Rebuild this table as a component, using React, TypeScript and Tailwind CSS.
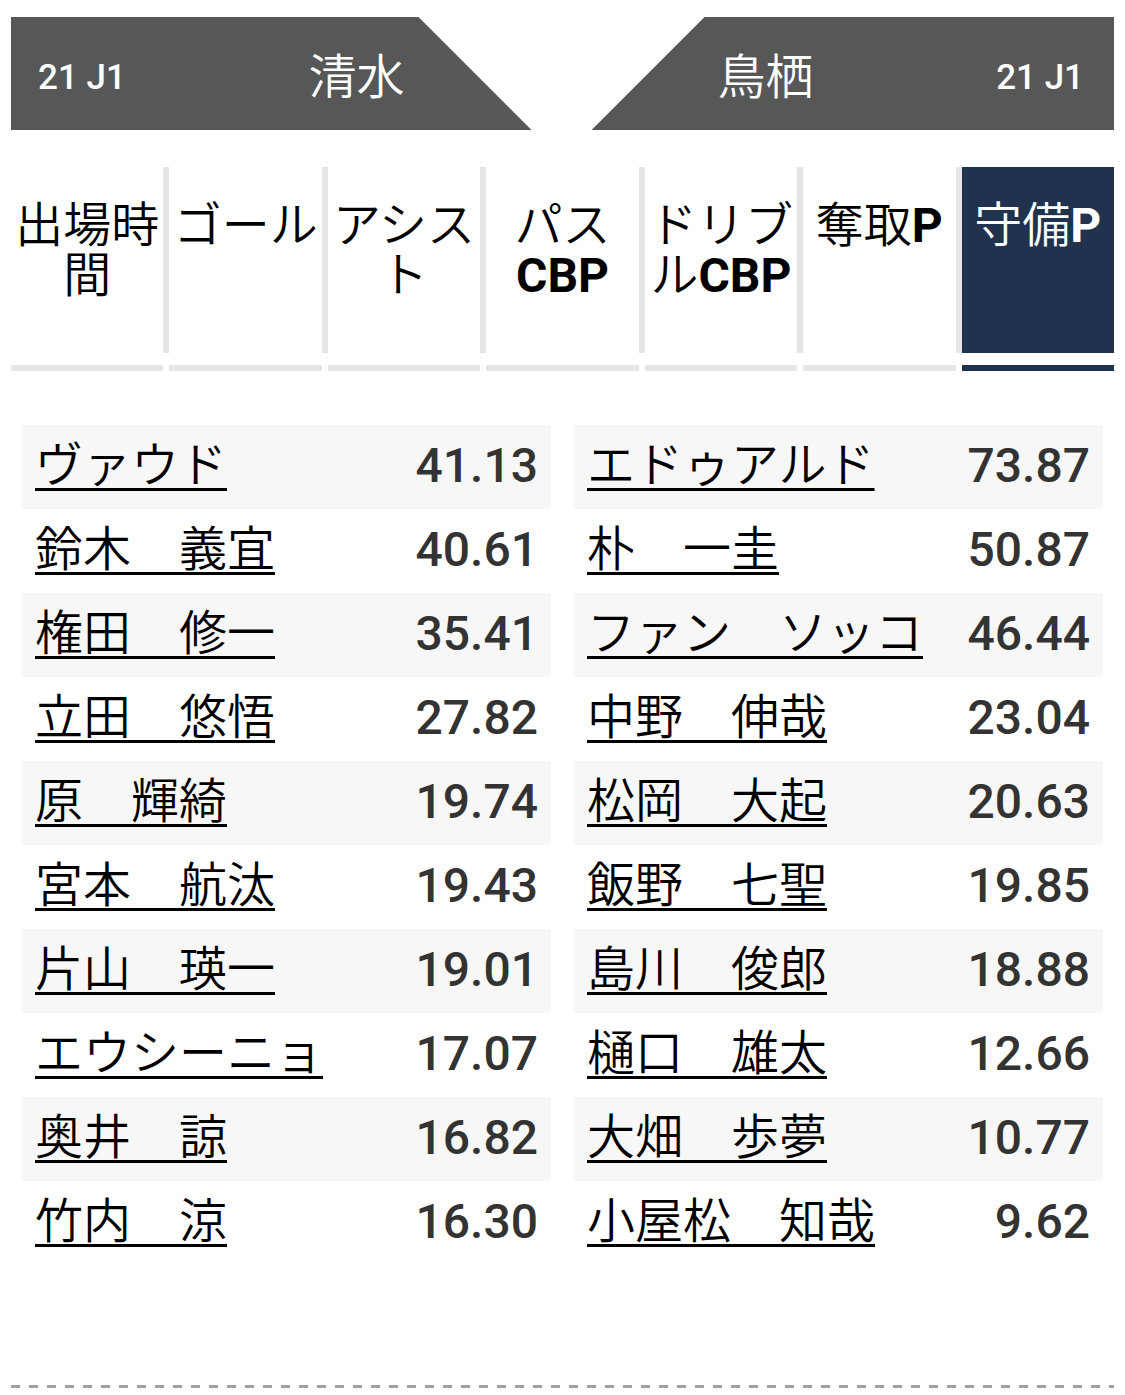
import React from "react";

const cjk = "font-['Noto_Sans_CJK_JP','Noto_Sans',sans-serif]";
const roboto = "font-['Roboto','Noto_Sans_CJK_JP',sans-serif]";

type Tab = { parts: { t: string; b?: boolean }[]; active?: boolean };

const tabs: Tab[] = [
  { parts: [{ t: "出場時間" }] },
  { parts: [{ t: "ゴール" }] },
  { parts: [{ t: "アシスト" }] },
  { parts: [{ t: "パス" }, { t: "CBP", b: true }] },
  { parts: [{ t: "ドリブル" }, { t: "CBP", b: true }] },
  { parts: [{ t: "奪取" }, { t: "P", b: true }] },
  { parts: [{ t: "守備" }, { t: "P", b: true }], active: true },
];

const left: [string, string][] = [
  ["ヴァウド", "41.13"],
  ["鈴木　義宜", "40.61"],
  ["権田　修一", "35.41"],
  ["立田　悠悟", "27.82"],
  ["原　輝綺", "19.74"],
  ["宮本　航汰", "19.43"],
  ["片山　瑛一", "19.01"],
  ["エウシーニョ", "17.07"],
  ["奥井　諒", "16.82"],
  ["竹内　涼", "16.30"],
];

const right: [string, string][] = [
  ["エドゥアルド", "73.87"],
  ["朴　一圭", "50.87"],
  ["ファン　ソッコ", "46.44"],
  ["中野　伸哉", "23.04"],
  ["松岡　大起", "20.63"],
  ["飯野　七聖", "19.85"],
  ["島川　俊郎", "18.88"],
  ["樋口　雄太", "12.66"],
  ["大畑　歩夢", "10.77"],
  ["小屋松　知哉", "9.62"],
];

function PlayerList({ rows }: { rows: [string, string][] }) {
  return (
    <div className="flex flex-col">
      {rows.map(([name, val], i) => (
        <div
          key={name}
          className={`flex h-[84px] items-center justify-between pl-[13px] pr-[13px] ${
            i % 2 === 0 ? "bg-[#f7f7f7]" : "bg-white"
          }`}
        >
          <span
            className={`${cjk} mb-[12px] text-[48px] font-[350] leading-[56px] text-black underline decoration-[3px] underline-offset-[6px] whitespace-nowrap`}
          >
            {name}
          </span>
          <span className={`${roboto} mb-[2px] text-[48px] font-medium leading-[56px] text-[#333333]`}>{val}</span>
        </div>
      ))}
    </div>
  );
}

export default function App() {
  return (
    <div className="relative h-[1395px] w-[1125px] overflow-hidden bg-white px-[11px]">
      {/* Header bars */}
      <div className="mt-[17px] flex gap-[60px]">
        <div className="flex h-[113px] flex-1 items-center justify-between bg-[#575757] pl-[27px] pr-[127px] pt-[9px] [clip-path:polygon(0_0,calc(100%-113px)_0,100%_100%,0_100%)]">
          <span className={`${roboto} text-[35px] font-medium text-white`}>21 J1</span>
          <span className={`${cjk} mb-[10px] text-[48px] font-[350] text-white`}>清水</span>
        </div>
        <div className="flex h-[113px] flex-1 items-center justify-between bg-[#575757] pl-[126px] pr-[30px] pt-[9px] [clip-path:polygon(113px_0,100%_0,100%_100%,0_100%)]">
          <span className={`${cjk} mb-[10px] text-[48px] font-[350] text-white`}>鳥栖</span>
          <span className={`${roboto} text-[35px] font-medium text-white`}>21 J1</span>
        </div>
      </div>

      {/* Tabs */}
      <div className="mt-[37px] flex">
        {tabs.map((tab, i) => (
          <React.Fragment key={i}>
            {i > 0 && (
              <div className="flex w-[6px] flex-col">
                <div className="h-[186px] bg-[#e6e6e6]" />
              </div>
            )}
            <div className="flex min-w-0 flex-1 flex-col">
              <div
                className={`h-[186px] pt-[34px] text-center text-[48px] leading-[50px] ${roboto} ${
                  tab.active ? "bg-[#21324e] text-white" : "bg-white text-black"
                }`}
              >
                {tab.parts.map((p, j) => (
                  <span key={j} className={p.b ? "font-bold" : "font-[350]"}>
                    {p.t}
                  </span>
                ))}
              </div>
              <div className={`mt-[12px] h-[6px] ${tab.active ? "bg-[#21324e]" : "bg-[#e6e6e6]"}`} />
            </div>
          </React.Fragment>
        ))}
      </div>

      {/* Tables */}
      <div className="mt-[54px] grid grid-cols-2 gap-[23px] px-[11px]">
        <PlayerList rows={left} />
        <PlayerList rows={right} />
      </div>

      {/* Dashed footer line */}
      <div className="mt-[120px] h-[3px] bg-[repeating-linear-gradient(90deg,#a0a0a0_0_9px,transparent_9px_18px)]" />
    </div>
  );
}
